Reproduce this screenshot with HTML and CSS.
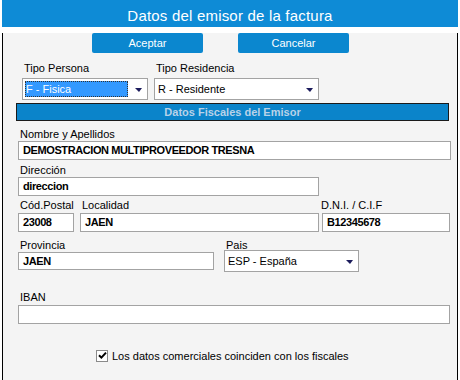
FILE: index.html
```html
<!DOCTYPE html>
<html lang="es">
<head>
    <meta charset="UTF-8">
    <meta name="viewport" content="width=device-width, initial-scale=1.0">
    <title>Datos del emisor de la factura</title>
    <link rel="stylesheet" href="styles.css">
</head>
<body>
    <div class="dialog">
        <div class="titlebar">Datos del emisor de la factura</div>

        <div class="dialog-body">
            <div class="actions">
                <button class="btn">Aceptar</button>
                <button class="btn">Cancelar</button>
            </div>

            <div class="row row-tipo">
                <div class="field">
                    <label>Tipo Persona</label>
                    <div class="select sel-persona">
                        <span class="sel-value selected">F - Fisica</span>
                        <span class="arrow"></span>
                    </div>
                </div>
                <div class="field">
                    <label>Tipo Residencia</label>
                    <div class="select sel-residencia">
                        <span class="sel-value">R - Residente</span>
                        <span class="arrow"></span>
                    </div>
                </div>
            </div>

            <div class="section">Datos Fiscales del Emisor</div>

            <div class="row row-nombre">
                <div class="field">
                    <label>Nombre y Apellidos</label>
                    <div class="input in-nombre">DEMOSTRACION MULTIPROVEEDOR TRESNA</div>
                </div>
            </div>

            <div class="row row-dir">
                <div class="field">
                    <label>Dirección</label>
                    <div class="input in-dir">direccion</div>
                </div>
            </div>

            <div class="row row-cp">
                <div class="field">
                    <label>Cód.Postal</label>
                    <div class="input in-cp">23008</div>
                </div>
                <div class="field">
                    <label class="lbl-loc">Localidad</label>
                    <div class="input in-loc">JAEN</div>
                </div>
                <div class="field">
                    <label class="lbl-dni">D.N.I. / C.I.F</label>
                    <div class="input in-dni">B12345678</div>
                </div>
            </div>

            <div class="row row-prov">
                <div class="field">
                    <label>Provincia</label>
                    <div class="input in-prov">JAEN</div>
                </div>
                <div class="field">
                    <label class="lbl-pais">Pais</label>
                    <div class="select sel-pais">
                        <span class="sel-value">ESP - España</span>
                        <span class="arrow"></span>
                    </div>
                </div>
            </div>

            <div class="row row-iban">
                <div class="field">
                    <label>IBAN</label>
                    <div class="input in-iban"></div>
                </div>
            </div>

            <div class="check-row">
                <span class="checkbox">
                    <svg width="9" height="9" viewBox="0 0 9 9">
                        <path d="M1 4.2 L3.4 6.6 L8 1.6" fill="none" stroke="#000" stroke-width="2"/>
                    </svg>
                </span>
                <span>Los datos comerciales coinciden con los fiscales</span>
            </div>
        </div>
    </div>
</body>
</html>
```

FILE: styles.css
```css
* {
    margin: 0;
    padding: 0;
    box-sizing: border-box;
}

:root {
    --blue: #0e8bd6;
    --btnblue: #0b87cf;
    --panel: #f4f4f4;
    --line: #a3a3a3;
}

body {
    background-color: #ffffff;
    font-family: "Liberation Sans", Arial, sans-serif;
    font-size: 11px;
    color: #000;
}

.dialog {
    width: 456px;
    margin-left: 2px;
}

.titlebar {
    height: 27px;
    background-color: var(--blue);
    color: #ffffff;
    font-size: 15px;
    line-height: 24px;
    padding-top: 4px;
    text-align: center;
    letter-spacing: 0.2px;
}

.dialog-body {
    height: 351px;
    background-color: var(--panel);
    border: 1px solid #000;
    border-top: 0;
}

.actions {
    display: flex;
    gap: 35px;
    margin-top: 6px;
    padding-left: 89px;
}

.btn {
    width: 111px;
    height: 20px;
    border: 0;
    border-radius: 2px;
    background-color: var(--btnblue);
    color: #ffffff;
    font-family: inherit;
    font-size: 11px;
}

.row {
    display: flex;
    padding-left: 15px;
}

.field label {
    display: block;
    height: 13px;
    line-height: 13px;
    padding-left: 2px;
}

.input {
    height: 19px;
    border: 1px solid var(--line);
    background-color: #ffffff;
    font-weight: bold;
    letter-spacing: -0.4px;
    line-height: 17px;
    padding-left: 4px;
    white-space: nowrap;
}

.select {
    height: 22px;
    border: 1px solid var(--line);
    background-color: #ffffff;
    display: flex;
    align-items: center;
    justify-content: space-between;
    padding: 0 5px 0 3px;
}

.sel-value {
    line-height: 16px;
}

.sel-value.selected {
    margin-left: -1px;
    width: 103px;
    height: 16px;
    padding-left: 1px;
    background-color: #3399ff;
    color: #ffffff;
    outline: 1px dotted #333;
    outline-offset: -1px;
}

.arrow {
    width: 0;
    height: 0;
    margin-top: 1px;
    border-left: 4px solid transparent;
    border-right: 3px solid transparent;
    border-top: 4px solid #1c1c5c;
}

/* Tipo persona / residencia */
.row-tipo {
    margin-top: 9px;
    padding-left: 19px;
    gap: 6px;
}

.row-tipo label {
    margin-bottom: 3px;
}

.sel-persona {
    width: 126px;
}

.sel-residencia {
    width: 165px;
}

.section {
    margin: 3px 0 0 13px;
    width: 433px;
    height: 18px;
    border: 1px solid #1a1a1a;
    background-color: #0b84ca;
    color: #b9d2e8;
    font-weight: bold;
    line-height: 16px;
    text-align: center;
}

/* Datos fiscales */
.row-nombre {
    margin-top: 7px;
}

.in-nombre {
    width: 433px;
}

.row-dir {
    margin-top: 4px;
}

.in-dir {
    width: 301px;
}

.row-cp {
    margin-top: 3px;
}

.row-cp label {
    margin-bottom: 1px;
}

.in-cp {
    width: 56px;
}

.in-loc {
    width: 239px;
    margin-left: 6px;
}

.lbl-loc {
    margin-left: 6px;
}

.in-dni {
    width: 128px;
    margin-left: 3px;
}

.row-prov {
    margin-top: 7px;
    gap: 10px;
}

.in-prov {
    width: 196px;
    height: 18px;
    line-height: 16px;
}

.sel-pais {
    width: 135px;
    margin-top: -2px;
}

.row-iban {
    margin-top: 19px;
}

.row-iban label {
    margin-bottom: 1px;
}

.in-iban {
    width: 432px;
}

.check-row {
    display: flex;
    align-items: center;
    gap: 4px;
    margin-top: 24px;
    padding-left: 93px;
    height: 15px;
}

.checkbox {
    width: 12px;
    height: 12px;
    border: 1px solid #8a8a8a;
    background-color: #ffffff;
    display: flex;
    align-items: center;
    justify-content: center;
}
```
